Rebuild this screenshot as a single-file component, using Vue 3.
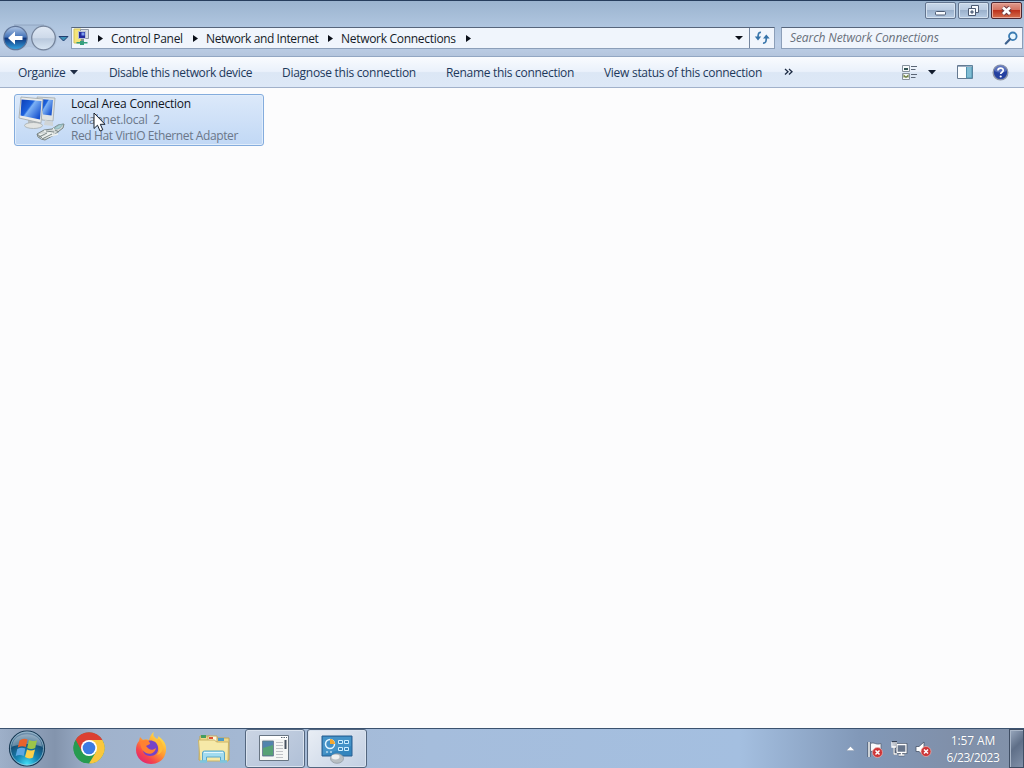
<template>
  <div class="desktop">
    <header class="frame">
      <div class="captions">
        <button class="cap min" aria-label="Minimize">
          <svg width="29" height="15" viewBox="0 0 29 15"><rect x="9.5" y="8.5" width="10" height="3.5" rx="1" fill="#f8fbff" stroke="#4c5b73" /></svg>
        </button>
        <button class="cap restore" aria-label="Restore">
          <svg width="29" height="15" viewBox="0 0 29 15">
            <g fill="#f8fbff" stroke="#4c5b73"><path d="M12.5 2.5h7v7h-7z" /><path d="M9.5 5.5h7v7h-7z" /><path d="M12 8h2v2h-2z" fill="#8ea2bd" /></g>
          </svg>
        </button>
        <button class="cap close" aria-label="Close">
          <svg width="29" height="15" viewBox="0 0 29 15"><path d="M11 4.5l7 6.5M18 4.5L11 11" stroke="#6e3a40" stroke-width="4.8" /><path d="M11 4.5l7 6.5M18 4.5L11 11" stroke="#fff" stroke-width="2.8" /></svg>
        </button>
      </div>
      <nav class="nav">
        <svg class="travel" width="71" height="30" viewBox="0 0 71 30">
          <defs>
            <linearGradient id="back" x1="0" y1="0" x2="0" y2="1">
              <stop offset="0" stop-color="#b4c9e6" /><stop offset=".45" stop-color="#4675ba" /><stop offset=".52" stop-color="#11387f" /><stop offset="1" stop-color="#35a6e4" />
            </linearGradient>
            <linearGradient id="fwd" x1="0" y1="0" x2="0" y2="1">
              <stop offset="0" stop-color="#e1eaf5" /><stop offset=".5" stop-color="#cdd9e9" /><stop offset=".53" stop-color="#b9c9dd" /><stop offset="1" stop-color="#d9e6f4" />
            </linearGradient>
          </defs>
          <path d="M14 2h30c8 0 13 6 13 13s-5 13-13 13c-7 0-9-4-15-4s-8 4-15 4" fill="#a2b5d0" opacity=".45" />
          <path d="M14 2h30" stroke="#8295b1" opacity=".6" />
          <circle cx="15.5" cy="15" r="11.7" fill="url(#back)" stroke="#62779a" stroke-width="1.2" />
          <path d="M8 15l7-6.500v4.500h7.500v4H15v4.500z" fill="#fff" />
          <circle cx="43.5" cy="15" r="11.8" fill="url(#fwd)" stroke="#76859c" stroke-width="1.3" />
          <path d="M59 13.500h9L63.500 18z" fill="#3b91b8" stroke="#213e70" />
        </svg>
        <div class="address">
          <svg class="place" width="18" height="18" viewBox="0 0 18 18">
            <path d="M1 1h7v14H1z" fill="#f4e57a" stroke="#d5c458" /><path d="M7.500 1.500h8v9h-8z" fill="#d9dde4" stroke="#8f98a5" />
            <path d="M5.500 3.500h7v7h-7z" fill="#232a9c" stroke="#b9c2d2" /><path d="M8.500 4.500h3v3h-3z" fill="#7b9df0" />
            <path d="M8 11h3v2H8z" fill="#87958f" /><path d="M3.500 14h11v1.500h-11zM7 13h4v4H7z" fill="#35a07e" />
          </svg>
          <template v-for="c in crumbs" :key="c.text">
            <svg class="tri" width="5" height="7" viewBox="0 0 5 7"><path d="M0 0l5 3.500L0 7z" fill="#0a0f18" /></svg>
            <span class="crumb" :style="{ width: c.width + 'px', letterSpacing: c.spacing + 'px' }">{{ c.text }}</span>
          </template>
          <svg class="tri" width="5" height="7" viewBox="0 0 5 7"><path d="M0 0l5 3.500L0 7z" fill="#0a0f18" /></svg>
          <svg class="history" width="8" height="4" viewBox="0 0 8 4"><path d="M0 0h8L4 4z" fill="#0a0f18" /></svg>
          <div class="refresh">
            <svg width="16" height="16" viewBox="0 0 16 16"><g fill="none" stroke="#3b78ad" stroke-width="1.7"><path d="M7 2.500C4.500 2 4 4 4 8" /><path d="M9 13c3 .500 3.300-2 3.300-5.500" /></g><path d="M.800 6.500h6.400L4 10.500zM9 8.500l3.300-4 3.400 4z" fill="#3472a8" /></svg>
          </div>
        </div>
        <div class="search">
          <span>Search Network Connections</span>
          <svg width="14" height="14" viewBox="0 0 14 14"><circle cx="8.800" cy="5.300" r="3.800" fill="#e9f7ff" stroke="#3a7cb3" stroke-width="1.8" /><path d="M5.900 8.200L1.800 12.500" stroke="#3f628f" stroke-width="2.2" stroke-linecap="round" /></svg>
        </div>
      </nav>
    </header>

    <div class="toolbar">
      <span class="cmd organize">Organize</span>
      <svg class="drop" width="8" height="5" viewBox="0 0 8 5"><path d="M0 0h8L4 4.500z" fill="#1e2c44" /></svg>
      <span v-for="c in commands" :key="c.text" class="cmd" :style="{ width: c.width + 'px', letterSpacing: c.spacing + 'px' }">{{ c.text }}</span>
      <svg class="more" width="9" height="8" viewBox="0 0 9 8"><path d="M1 1l3 2.700L1 6.500M5 1l3 2.700L5 6.500" fill="none" stroke="#1e2c44" stroke-width="1.3" /></svg>
      <svg class="views" width="17" height="16" viewBox="0 0 17 16">
        <path d="M1.500 1.500h7v6h-7zM1.500 9.500h7v6h-7z" fill="#f8fbfb" stroke="#88929e" />
        <path d="M3 5h4" stroke="#355" stroke-width="2" /><path d="M3 13.500v-2l2 2 2-2v2" fill="none" stroke="#718247" stroke-width="1.2" />
        <path d="M10 2.500h6M10 5.500h4.500M10 10.500h6M10 13.500h4.500" stroke="#5b6676" />
      </svg>
      <svg class="viewdrop" width="8" height="5" viewBox="0 0 8 5"><path d="M0 0h8L4 4.500z" fill="#111b2c" /></svg>
      <svg class="pane" width="17" height="14" viewBox="0 0 17 14"><path d="M.500.500h15v13H.500z" fill="#fafdff" stroke="#657991" /><path d="M9.500 1h5.500v12H9.500z" fill="#80bdd4" stroke="#4f90ad" /><path d="M1 1.500h14" stroke="#9caec2" /></svg>
      <svg class="help" width="17" height="17" viewBox="0 0 17 17">
        <circle cx="8.500" cy="8.500" r="7.300" fill="#2440a0" stroke="#8b93a5" stroke-width="1.4" /><path d="M2.500 7a6 6 0 0 1 12 0q-6 3-12 0" fill="#6e83c9" opacity=".7" />
        <path d="M5.900 6.500c.200-3.300 5.500-3.100 5.300 0-.100 1.700-2.500 1.800-2.500 3.500" fill="none" stroke="#fff" stroke-width="1.7" /><circle cx="8.700" cy="12.500" r="1.100" fill="#fff" />
      </svg>
    </div>

    <main class="content">
      <div class="connection">
        <svg class="adapter" width="50" height="48" viewBox="0 0 50 48">
          <defs><linearGradient id="screen" x1="0" y1="0" x2="1" y2=".7"><stop offset="0" stop-color="#0b3cb4" /><stop offset=".45" stop-color="#1d62dc" /><stop offset=".52" stop-color="#7db2f5" /><stop offset="1" stop-color="#1853cf" /></linearGradient></defs>
          <path d="M21 2l18 1-2 23-11-1z" fill="#dfe3e3" stroke="#a2a8aa" stroke-width=".8" /><path d="M23 4l14 1-1.500 15.500-8.500-1z" fill="url(#screen)" />
          <path d="M29 25l8 2v4l-9-1z" fill="#cfd4d6" />
          <path d="M12 25h11v5H12z" fill="#b7bdc0" /><ellipse cx="17.500" cy="30.500" rx="9" ry="3" fill="#e2e4e2" stroke="#a7adae" stroke-width=".8" />
          <path d="M5 2l22 2-2 24-22-5z" fill="#ebecea" stroke="#a0a6a7" stroke-width=".8" /><path d="M5.500 4.500l20 1.500-1.500 18.500-19.500-4z" fill="url(#screen)" />
          <path d="M21 39l7-4 8-1 6-4 6-1-1 4-9 7-9 5-4-1-3-2z" fill="#d0d6d5" stroke="#7b8685" />
          <path d="M23 40l12-2m-10 5l12-5m-9-2l9 1m-7 5l12-3m-5-5l8-2" fill="none" stroke="#eef2ef" stroke-width="1.5" />
          <path d="M23 42l8-4m-5 6l10-5m-6-3l8 1m1-2l4 2M21 39l5 4" fill="none" stroke="#7a8686" />
          <path d="M38 33.500l5-3.500 4-1-3 4-3 1z" fill="#a9d0d5" stroke="#7fa7ac" stroke-width=".7" />
        </svg>
        <div class="details">
          <span class="title">Local Area Connection</span>
          <span class="domain">collabnet.local&nbsp; 2</span>
          <span class="device">Red Hat VirtIO Ethernet Adapter</span>
        </div>
      </div>
      <svg class="cursor" width="14" height="20" viewBox="0 0 14 20"><path d="M1 1v15.500l3.500-3.300L7 19l2.800-1.200-2.500-5.500H12z" fill="#fff" stroke="#16202e" /></svg>
    </main>

    <footer class="taskbar">
      <svg class="orb" width="40" height="38" viewBox="0 0 40 38">
        <defs><radialGradient id="orbfill" cx=".5" cy=".95" r=".9"><stop offset="0" stop-color="#43e0f6" /><stop offset=".35" stop-color="#1686b5" /><stop offset=".7" stop-color="#155078" /><stop offset="1" stop-color="#7795b0" /></radialGradient></defs>
        <circle cx="20" cy="18.500" r="17.500" fill="url(#orbfill)" stroke="#173954" stroke-width="1.2" /><circle cx="20" cy="18.500" r="16.500" fill="none" stroke="#a9ccdc" stroke-width=".7" />
        <path d="M5 16.500C6 0 34 0 35 16.500q-15-5-30 0" fill="#fff" opacity=".32" />
        <path d="M12.500 10.500q4-3 8-1l-1.700 7.500q-4-1.500-8 .500z" fill="#e8632c" /><path d="M22 10q4 2 8 .200L28.200 18q-4 2-8 0z" fill="#9dc549" />
        <path d="M10.300 19q4-2 8-.500L16.700 26q-4-2-8 0z" fill="#5ca7e3" /><path d="M20 19.500q4 2 8 0l-2 8q-4 2-8-.500z" fill="#fbd04a" />
      </svg>
      <svg class="chrome" width="32" height="32" viewBox="0 0 32 32">
        <circle cx="16" cy="16" r="15.500" fill="#279b50" />
        <path d="M23 20L16 31.500A15.500 15.500 0 0 0 29.400 8H16z" fill="#fac73c" />
        <path d="M9 20L2.600 8A15.500 15.500 0 0 1 29.400 8H16z" fill="#dc4032" /><path d="M2.600 8L9 20l7 3-3.500 8.100A15.500 15.500 0 0 1 2.600 8z" fill="#279b50" />
        <circle cx="16" cy="16" r="8" fill="#fff" /><circle cx="16" cy="16" r="6.300" fill="#3d7be3" />
      </svg>
      <svg class="firefox" width="32" height="32" viewBox="0 0 32 32">
        <defs><linearGradient id="fox" x1=".8" y1=".1" x2=".2" y2=".9"><stop offset="0" stop-color="#ffe24b" /><stop offset=".45" stop-color="#ff9830" /><stop offset=".8" stop-color="#f5444d" /><stop offset="1" stop-color="#e42b6b" /></linearGradient></defs>
        <path d="M19 0c-2 4 1 5 3 7 2-1 1-3 1-3 6 4 9 9 8 15-1 8-7 13-15 13S1 26 1 18c0-4 1-7 3-9l1-4 3 3c2-1 4-1 6 0 1-4 3-7 5-8z" fill="url(#fox)" />
        <path d="M11 10c3-3 11-2 12 5 1 6-3 9-8 9-4 0-7-3-7-6z" fill="#7542c8" />
        <path d="M5 9l6-1c2 0 4 2 4 4l-4 2c3 4 6 5 10 2-1 5-6 7-10 5-4-2-6-7-6-12" fill="#ff8130" /><path d="M21 9c4 4 5 10 1 14 8-3 7-11 2-16" fill="#ffba38" />
      </svg>
      <svg class="explorer" width="34" height="30" viewBox="0 0 34 30">
        <path d="M3 2h10l2 2h17v22H2z" fill="#efd98a" stroke="#c1a659" /><path d="M4 1h5v3H4z" fill="#459d60" /><path d="M11 2h9v6h-9z" fill="#fff8df" stroke="#c6a95b" /><path d="M21 4h6v3h-6z" fill="#4c9bc8" /><path d="M12 3h4v2h-4z" fill="#df5132" />
        <path d="M1.500 6h16l2 2h12l-.500 19H3z" fill="#f6e9a8" stroke="#cab366" />
        <path d="M5.500 27V19q0-2 2-2h18q2 0 2 2v8h-4v-4h-14v4z" fill="#a2dbef" stroke="#5ba8c9" /><path d="M7 18.500h19" stroke="#e4f7fd" />
        <path d="M3 27.500h7M23 27.500h7" stroke="#80c5dc" stroke-width="2.5" />
      </svg>
      <div class="task task-doc">
        <svg width="30" height="26" viewBox="0 0 30 26">
          <path d="M.500.500h29v25H.500z" fill="#f5f6f5" stroke="#687583" /><path d="M1 1h28v3H1z" fill="#fff" /><path d="M22 2.500h6" stroke="#596773" stroke-dasharray="1.5 1" />
          <path d="M3.500 6h11v15h-11z" fill="#438374" stroke="#72839b" /><path d="M4 6.500h10V12L4 14z" fill="#5283ae" /><path d="M4 13l10-3v10H4z" fill="#57a176" />
          <path d="M17 7.500h7M17 10.500h7M17 13.500h7M17 16.500h7M17 19.500h7M17 22.500h7" stroke="#c0c2c6" /><path d="M26.500 5v9" stroke="#46515e" stroke-width="2" />
        </svg>
      </div>
      <div class="task task-panel">
        <svg width="32" height="29" viewBox="0 0 32 29">
          <path d="M1 1h30v20H1z" fill="#3485bd" stroke="#285f91" /><path d="M2 2h28v9L2 20z" fill="#4593c8" />
          <circle cx="9" cy="9" r="4.500" fill="#438fc5" stroke="#e0f4ff" stroke-width="1.5" /><path d="M9 9V4a5 5 0 0 1 5 5z" fill="#f6a72d" />
          <path d="M17.500 5.500h4v3h-4zM23.500 5.500h4v3h-4zM17.500 12.500h4v3h-4zM23.500 12.500h4v3h-4z" fill="#3984bb" stroke="#cceeff" /><path d="M5 17h2M9 17h2" stroke="#b5d8ec" stroke-width="1.5" />
          <ellipse cx="16" cy="23.500" rx="6.500" ry="4.800" fill="#b9bfc3" stroke="#8b959d" stroke-width=".7" /><ellipse cx="14.500" cy="22" rx="4" ry="2.400" fill="#eef0f0" />
        </svg>
      </div>
      <div class="tray">
        <svg class="hidden-icons" width="9" height="5" viewBox="0 0 9 5"><path d="M.500 4.500L4.500 .500l4 4z" fill="#fff" stroke="#75849a" stroke-width=".3" /></svg>
        <svg class="flag" width="18" height="18" viewBox="0 0 18 18">
          <path d="M3 1v15" stroke="#3f4b5d" stroke-width="3" /><path d="M3 1v15" stroke="#fff" stroke-width="1.5" /><path d="M4.500 2.500c4-2 5 2 10.500 0v8c-5 2-6.500-1.500-10.500 0z" fill="#f8fafc" stroke="#5a6678" stroke-width=".8" />
          <circle cx="11.500" cy="11.500" r="5" fill="#cd3537" stroke="#edb2ac" stroke-width=".7" /><path d="M9.500 9.500l4 4M13.500 9.500l-4 4" stroke="#fff" stroke-width="1.5" />
        </svg>
        <svg class="network" width="17" height="16" viewBox="0 0 17 16">
          <path d="M6 3.500h9v8H6zM7.500 14h6M10.500 12v2" fill="none" stroke="#364154" stroke-width="2.6" /><path d="M6 3.500h9v8H6z" fill="#67758b" stroke="#fff" stroke-width="1.3" /><path d="M7.500 14h6M10.500 12v2" stroke="#fff" stroke-width="1.3" />
          <path d="M1 1h4v5L3 7v6h3" fill="#525f74" stroke="#364154" stroke-width="2" /><path d="M1 1v5h4V1M3 1v12h3" fill="none" stroke="#fff" stroke-width="1.3" />
        </svg>
        <svg class="volume" width="18" height="17" viewBox="0 0 18 17">
          <path d="M1 5.500h3L9 1v14l-5-4.500H1z" fill="#fff" stroke="#465368" stroke-width=".8" />
          <circle cx="11" cy="10.500" r="5" fill="#cd3537" stroke="#edb2ac" stroke-width=".7" /><path d="M9 8.500l4 4M13 8.500l-4 4" stroke="#fff" stroke-width="1.5" />
        </svg>
        <div class="clock"><span class="time">1:57 AM</span><span class="date">6/23/2023</span></div>
        <div class="peek"></div>
      </div>
    </footer>
  </div>
</template>

<script setup>
const crumbs = [
  { text: 'Control Panel', width: 72, spacing: -0.3 },
  { text: 'Network and Internet', width: 112, spacing: -0.4 },
  { text: 'Network Connections', width: 115, spacing: -0.3 },
];

const commands = [
  { text: 'Disable this network device', width: 143, spacing: -0.35 },
  { text: 'Diagnose this connection', width: 134, spacing: -0.28 },
  { text: 'Rename this connection', width: 128, spacing: -0.3 },
  { text: 'View status of this connection', width: 158, spacing: -0.28 },
];
</script>

<style>
body {
  margin: 0;
  overflow: hidden;
}
</style>

<style scoped>
.desktop {
  width: 1024px;
  height: 768px;
  display: flex;
  flex-direction: column;
  background: #fcfcfd;
  font-family: "Open Sans", "Noto Sans", sans-serif;
  font-size: 12px;
  line-height: 16px;
  white-space: nowrap;
}

svg {
  display: block;
  flex: none;
}

.desktop *,
.desktop {
  box-sizing: border-box;
}

.frame {
  height: 57px;
  flex: none;
  border-top: 1px solid #273e5d;
  border-bottom: 1px solid #92a6c2;
  background: linear-gradient(#9bb4cf, #afc5df 45%, #bdcfe7 80%, #b4c5dd);
}

.captions {
  height: 25px;
  display: flex;
  justify-content: flex-end;
  gap: 2px;
  padding: 1px 2px 0 0;
}

.cap {
  width: 31px;
  height: 17px;
  padding: 0;
  border: 1px solid #63758f;
  border-radius: 2px;
  background: linear-gradient(#c8d8ea, #b8cae0 48%, #9bb1cc 50%, #b7cce4);
  box-shadow: inset 0 0 0 1px #d5e2f0;
}

.close {
  border-color: #4d2630;
  background: linear-gradient(#df9b8e, #d2705e 48%, #bd321d 50%, #d5704e);
  box-shadow: inset 0 0 0 1px #e9a99b;
}

.nav {
  height: 24px;
  display: flex;
  align-items: center;
}

.address,
.search {
  height: 22px;
  display: flex;
  align-items: center;
  background: #f0f5fc;
  border: 1px solid #8c9fb9;
  border-top-color: #56657b;
}

.address {
  width: 704px;
  color: #151c28;
}

.place {
  margin: 0 7px 2px 1px;
}

.crumb {
  margin: 0 10px 0 8px;
  padding-top: 1px;
}

.history {
  margin-left: auto;
  margin-right: 6px;
}

.refresh {
  width: 25px;
  height: 20px;
  display: flex;
  align-items: center;
  justify-content: center;
  border-left: 1px solid #74869f;
}

.search {
  width: 242px;
  margin-left: 6px;
  padding: 0 4px 0 8px;
  justify-content: space-between;
  color: #68707b;
  font-style: italic;
  letter-spacing: -0.1px;
}

.toolbar {
  height: 31px;
  flex: none;
  display: flex;
  align-items: center;
  padding-left: 18px;
  border-bottom: 1px solid #a1b1ca;
  background: linear-gradient(#f9fbfe, #eaf1fb 48%, #dce7f5 52%, #dde8f7);
  color: #1e395b;
}

.cmd {
  margin-right: 30px;
  padding-top: 1px;
}

.organize {
  width: 48px;
  margin-right: 4px;
  letter-spacing: -0.35px;
}

.drop {
  margin-right: 31px;
}

.more {
  margin-left: -8px;
}

.views {
  margin-left: 108px;
}

.viewdrop {
  margin-left: 10px;
}

.pane {
  margin-left: 21px;
}

.help {
  margin-left: 18px;
}

.content {
  height: 640px;
  flex: none;
  position: relative;
  padding: 6px 14px;
}

.connection {
  width: 250px;
  height: 52px;
  display: flex;
  border: 1px solid #84acdd;
  border-radius: 3px;
  background: linear-gradient(#dce9fa, #c1d8f5);
  box-shadow: inset 0 0 0 1px #e1edfb;
}

.adapter {
  margin-left: 1px;
}

.details {
  display: flex;
  flex-direction: column;
  padding: 1px 0 0 5px;
  color: #6a7789;
}

.title {
  color: #10151e;
  letter-spacing: -0.24px;
}

.domain {
  letter-spacing: -0.25px;
}

.device {
  letter-spacing: -0.39px;
}

.cursor {
  position: absolute;
  left: 93px;
  top: 24px;
}

.taskbar {
  height: 40px;
  flex: none;
  display: flex;
  align-items: center;
  border-top: 1px solid #3b526f;
  background: linear-gradient(90deg, #9eb0c9 0, #8394ad 55px, #a0b2cc 95px, #a4b8d3 240px, #a5bddc 430px, #a4bfe0 740px, #8198b8 860px, #8090aa 950px, #8292aa);
}

.orb {
  margin-left: 7px;
}

.chrome {
  margin-left: 26px;
  margin-bottom: 2px;
}

.firefox {
  margin-left: 30px;
  margin-bottom: 2px;
}

.explorer {
  margin-left: 30px;
}

.task {
  width: 60px;
  height: 39px;
  display: flex;
  align-items: center;
  justify-content: center;
  border: 1px solid #53667f;
  border-radius: 3px;
  background: linear-gradient(135deg, #cbd5e4, #b0c0d7);
  box-shadow: inset 0 0 0 1px #dae3ef;
}

.task-doc {
  margin-left: 14px;
  padding: 0 2px 2px 0;
}

.task-panel {
  margin-left: 2px;
  background: linear-gradient(135deg, #e9eef5, #c2cfe2);
}

.task-panel svg {
  margin-top: 2px;
}

.tray {
  height: 39px;
  margin-left: auto;
  display: flex;
  align-items: center;
  color: #fff;
}

.flag {
  margin: 2px 0 0 11px;
}

.network {
  margin: 1px 0 0 7px;
}

.volume {
  margin: 1px 0 0 7px;
}

.clock {
  width: 62px;
  margin-left: 9px;
  margin-right: 5px;
  display: flex;
  flex-direction: column;
  align-items: center;
  line-height: 17px;
  text-shadow: 0 0 1px #5f6d85;
}

.time {
  letter-spacing: -0.1px;
}

.date {
  letter-spacing: -0.45px;
}

.peek {
  width: 15px;
  height: 39px;
  border: 1px solid #3f4e64;
  background: linear-gradient(135deg, #9aa9bf, #5f6f88 45%, #8090a8);
  box-shadow: inset 1px 1px 0 #aab7c9;
}
</style>
